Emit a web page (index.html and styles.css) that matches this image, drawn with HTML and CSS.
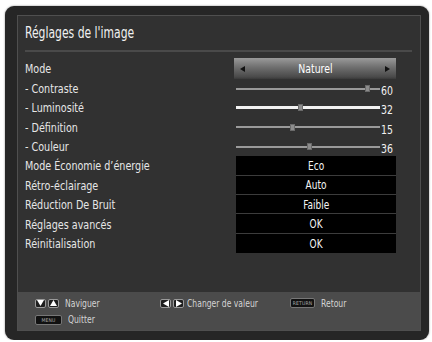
FILE: index.html
```html
<!DOCTYPE html>
<html lang="fr">
<head>
    <meta charset="UTF-8">
    <meta name="viewport" content="width=device-width, initial-scale=1.0">
    <title>Réglages de l'image</title>
    <link rel="stylesheet" href="styles.css">
</head>
<body>
    <div class="tv-frame">
        <div class="panel">
            <h1 class="panel-title"><span class="narrow">Réglages de l'image</span></h1>

            <div class="menu">
                <div class="row row-mode">
                    <span class="label">Mode</span>
                    <div class="selector">
                        <span class="arrow left"></span>
                        <span class="selector-text narrow">Naturel</span>
                        <span class="arrow right"></span>
                    </div>
                </div>
                <div class="row">
                    <span class="label">- Contraste</span>
                    <div class="slider">
                        <div class="track"><span class="thumb" style="left: 91%;"></span></div>
                        <span class="num narrow">60</span>
                    </div>
                </div>
                <div class="row">
                    <span class="label">- Luminosité</span>
                    <div class="slider active">
                        <div class="track"><span class="thumb" style="left: 45%;"></span></div>
                        <span class="num narrow">32</span>
                    </div>
                </div>
                <div class="row">
                    <span class="label">- Définition</span>
                    <div class="slider">
                        <div class="track"><span class="thumb" style="left: 39%;"></span></div>
                        <span class="num narrow">15</span>
                    </div>
                </div>
                <div class="row">
                    <span class="label">- Couleur</span>
                    <div class="slider">
                        <div class="track"><span class="thumb" style="left: 51%;"></span></div>
                        <span class="num narrow">36</span>
                    </div>
                </div>
                <div class="row row-box">
                    <span class="label">Mode Économie d’énergie</span>
                    <div class="value-box"><span class="narrow">Eco</span></div>
                </div>
                <div class="row row-box">
                    <span class="label">Rétro-éclairage</span>
                    <div class="value-box"><span class="narrow">Auto</span></div>
                </div>
                <div class="row row-box">
                    <span class="label">Réduction De Bruit</span>
                    <div class="value-box"><span class="narrow">Faible</span></div>
                </div>
                <div class="row row-box">
                    <span class="label">Réglages avancés</span>
                    <div class="value-box"><span class="narrow">OK</span></div>
                </div>
                <div class="row row-box">
                    <span class="label">Réinitialisation</span>
                    <div class="value-box last"><span class="narrow">OK</span></div>
                </div>
            </div>

            <!-- Help bar -->
            <div class="footer">
                <div class="hint">
                    <span class="keys">
                        <span class="key"><svg width="7" height="6" viewBox="0 0 7 6"><path d="M0 0H7L3.5 6Z" fill="#fff"/></svg></span>
                        <span class="key"><svg width="7" height="6" viewBox="0 0 7 6"><path d="M0 6H7L3.5 0Z" fill="#fff"/></svg></span>
                    </span>
                    <span class="narrow">Naviguer</span>
                </div>
                <div class="hint tight">
                    <span class="keys">
                        <span class="key"><svg width="6" height="7" viewBox="0 0 6 7"><path d="M6 0V7L0 3.5Z" fill="#fff"/></svg></span>
                        <span class="key"><svg width="6" height="7" viewBox="0 0 6 7"><path d="M0 0V7L6 3.5Z" fill="#fff"/></svg></span>
                    </span>
                    <span class="narrow">Changer de valeur</span>
                </div>
                <div class="hint">
                    <span class="btn-key return">RETURN</span>
                    <span class="narrow">Retour</span>
                </div>
                <div class="hint">
                    <span class="btn-key">MENU</span>
                    <span class="narrow">Quitter</span>
                </div>
            </div>
        </div>
    </div>
</body>
</html>
```

FILE: styles.css
```css
body {
    margin: 0;
    background: #fff;
    font-family: 'DejaVu Sans Condensed', 'Liberation Sans Narrow', 'Liberation Sans', sans-serif;
    font-stretch: condensed;
    color: #e6e6e6;
}
.narrow {
    display: inline-block;
    white-space: nowrap;
    transform: scaleX(0.8);
}
.tv-frame {
    box-sizing: border-box;
    width: 424px;
    height: 334px;
    margin: 6px 0 0 5px;
    padding: 9px 8px 9px 12px;
    background: #262626;
    border-radius: 9px;
    box-shadow: 0 0 2px rgba(0, 0, 0, 0.5);
}
.panel {
    box-sizing: border-box;
    height: 100%;
    border: 1px solid #4f4f4f;
    background: #313131;
    display: flex;
    flex-direction: column;
}
.panel-title {
    margin: 0 8px 0 7px;
    height: 36px;
    display: flex;
    align-items: center;
    font-size: 15px;
    font-weight: normal;
    color: #f0f0f0;
    border-bottom: 2px solid #4a4a4a;
    box-sizing: border-box;
}
.panel-title .narrow {
    transform-origin: left center;
}
.menu {
    margin-top: 6px;
    padding-left: 7px;
}
.row {
    display: grid;
    grid-template-columns: 209px 162px;
    align-items: center;
    height: 19.3px;
    font-size: 13px;
}
.row-mode {
    height: 21px;
}
.label {
    white-space: nowrap;
    transform: scaleX(0.82);
    transform-origin: left center;
}
.selector {
    height: 21px;
    display: flex;
    align-items: center;
    justify-content: space-between;
    padding: 0 6px;
    background: linear-gradient(to bottom, #9a9a9a, #6e6e6e 45%, #4a4a4a 90%, #3a3a3a);
    box-sizing: border-box;
}
.selector-text {
    font-size: 13px;
    color: #fff;
}
.arrow {
    width: 0;
    height: 0;
    border-top: 3px solid transparent;
    border-bottom: 3px solid transparent;
}
.arrow.left { border-right: 5px solid #111; }
.arrow.right { border-left: 5px solid #111; }
.slider {
    display: flex;
    align-items: center;
    padding-left: 2px;
}
.track {
    position: relative;
    width: 156px;
    height: 2px;
    background: #9a9a9a;
}
.slider.active .track {
    height: 3px;
    background: #f2f2f2;
}
.thumb {
    position: absolute;
    top: 50%;
    width: 5px;
    height: 7px;
    margin: -3.5px 0 0 -2.5px;
    background: #8c8c8c;
    border: 1px solid #6a6a6a;
    box-sizing: border-box;
}
.num {
    margin: 4px 0 0 1px;
    font-size: 13px;
    color: #f2f2f2;
    transform-origin: left center;
}
.value-box {
    margin-left: 2px;
    height: 19.4px;
    display: flex;
    align-items: center;
    justify-content: center;
    background: #000;
    border-bottom: 1px solid #3c3c3c;
    box-sizing: border-box;
    font-size: 12.5px;
    color: #f5f5f5;
}
.value-box.last {
    border-bottom: none;
}
.row-box {
    height: 19.4px;
}
.footer {
    margin-top: auto;
    height: 38px;
    box-sizing: border-box;
    padding: 3px 0 2px 17px;
    background: #4b4b4b;
    display: grid;
    grid-template-columns: 125px 130px 1fr;
    grid-auto-rows: 16.5px;
    font-size: 10px;
    color: #d4d4d4;
}
.hint {
    display: flex;
    align-items: center;
    gap: 6px;
    white-space: nowrap;
}
.hint.tight {
    gap: 3px;
}
.hint .narrow {
    transform: scaleX(0.85);
    transform-origin: left center;
}
.keys {
    display: flex;
    gap: 2px;
}
.key {
    width: 11px;
    height: 9px;
    display: flex;
    align-items: center;
    justify-content: center;
    background: #1e1e1e;
    border: 1px solid #9a9a9a;
    border-radius: 2px;
    box-sizing: border-box;
}
.btn-key {
    width: 25px;
    height: 8px;
    display: flex;
    align-items: center;
    justify-content: center;
    background: #111;
    border: 1px solid #777;
    border-radius: 2px;
    font-size: 5px;
    color: #aaa;
    letter-spacing: 0.2px;
}
.btn-key.return {
    width: 23px;
}
```
